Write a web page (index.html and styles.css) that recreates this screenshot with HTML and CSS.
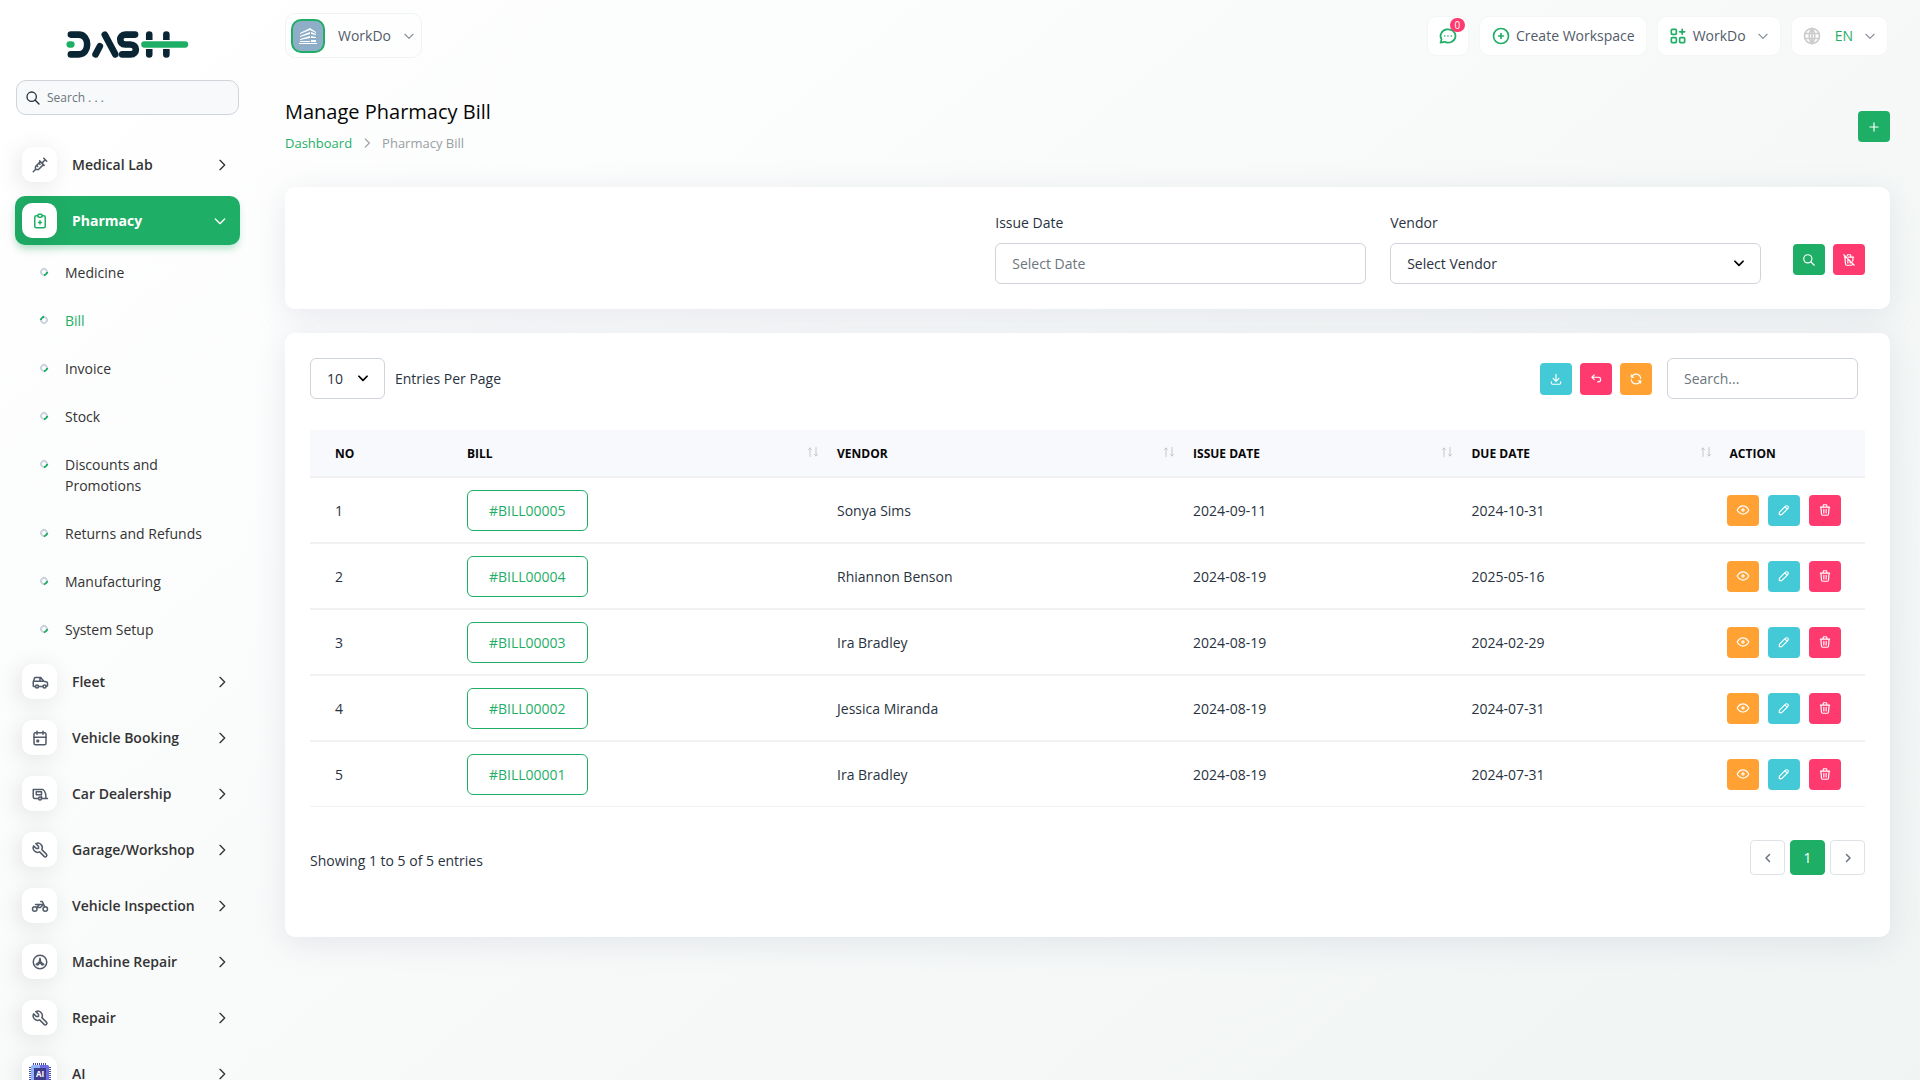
FILE: index.html
```
<!DOCTYPE html>
<html lang="en">
<head>
    <meta charset="UTF-8">
    <meta name="viewport" content="width=device-width, initial-scale=1.0">
    <title>Manage Pharmacy Bill</title>
    <link rel="stylesheet" href="styles.css">
</head>
<body>

    <!-- Icon sprite -->
    <svg class="sprite" aria-hidden="true">
        <symbol id="i-right" viewBox="0 0 24 24"><path d="M9 5l7 7-7 7"/></symbol>
        <symbol id="i-left" viewBox="0 0 24 24"><path d="M15 5l-7 7 7 7"/></symbol>
        <symbol id="i-down" viewBox="0 0 24 24"><path d="M5 9l7 7 7-7"/></symbol>
        <symbol id="i-search" viewBox="0 0 24 24"><circle cx="10" cy="10" r="7"/><path d="M21 21l-6-6"/></symbol>
        <symbol id="i-plus" viewBox="0 0 24 24"><path d="M12 5v14M5 12h14"/></symbol>
        <symbol id="i-vaccine" viewBox="0 0 24 24"><path d="M17 3l4 4M19 5l-4.500 4.500M11.500 6.500l6 6M16.500 11.500L10 18H6v-4l6.500-6.500M7.500 12.500L9 14M10.500 9.500L12 11M3 21l3-3"/></symbol>
        <symbol id="i-clipboard" viewBox="0 0 24 24"><path d="M9 5H7a2 2 0 0 0-2 2v12a2 2 0 0 0 2 2h10a2 2 0 0 0 2-2V7a2 2 0 0 0-2-2h-2M10 14h4M12 12v4"/><rect x="9" y="3" width="6" height="4" rx="2"/></symbol>
        <symbol id="i-car" viewBox="0 0 24 24"><circle cx="8" cy="18" r="2"/><circle cx="18" cy="18" r="2"/><path d="M6 18H4a1 1 0 0 1-1-1v-5l2-6h8l4 5 4 1a2 2 0 0 1 1 2v3l-2 1M16 18h-6M3 11h14M12 11V6"/></symbol>
        <symbol id="i-calendar" viewBox="0 0 24 24"><rect x="4" y="5" width="16" height="16" rx="2"/><path d="M16 3v4M8 3v4M4 11h16M8 15h2v2H8z"/></symbol>
        <symbol id="i-caravan" viewBox="0 0 24 24"><path d="M10 18H5a2 2 0 0 1-2-2V6h13c3 2 4 6 4 12h2M14 18h6M14 15v3"/><circle cx="12" cy="18" r="2"/><rect x="7" y="9" width="7" height="4"/></symbol>
        <symbol id="i-tool" viewBox="0 0 24 24"><path d="M7 10h3V7L6.500 3.500a6 6 0 0 1 8 8l6 6a2 2 0 0 1-3 3l-6-6a6 6 0 0 1-8-8L7 10"/></symbol>
        <symbol id="i-motorbike" viewBox="0 0 24 24"><circle cx="5" cy="16" r="3"/><circle cx="19" cy="16" r="3"/><path d="M7.500 14h5l4-4H6M7.500 14l4-4M13 6h2l1.500 3 2 4"/></symbol>
        <symbol id="i-fan" viewBox="0 0 24 24"><circle cx="12" cy="12" r="9"/><path d="M12 7l-1 5-4 3 2 1 3-3 3 3 2-1-4-3zM12 10v3"/></symbol>
        <symbol id="i-chat" viewBox="0 0 24 24"><path d="M3 20l1.300-3.900A9 8 0 1 1 7.700 19L3 20M12 12v.01M8 12v.01M16 12v.01"/></symbol>
        <symbol id="i-circle-plus" viewBox="0 0 24 24"><circle cx="12" cy="12" r="9"/><path d="M9 12h6M12 9v6"/></symbol>
        <symbol id="i-apps" viewBox="0 0 24 24"><rect x="4" y="4" width="6" height="6" rx="1"/><rect x="4" y="14" width="6" height="6" rx="1"/><rect x="14" y="14" width="6" height="6" rx="1"/><path d="M14 7h6M17 4v6"/></symbol>
        <symbol id="i-world" viewBox="0 0 24 24"><circle cx="12" cy="12" r="9"/><path d="M3.600 9h16.800M3.600 15h16.800M12 3v18M11.500 3a17 17 0 0 0 0 18M12.500 3a17 17 0 0 1 0 18"/></symbol>
        <symbol id="i-trash" viewBox="0 0 24 24"><path d="M4 7h16M10 11v6M14 11v6M5 7l1 12a2 2 0 0 0 2 2h8a2 2 0 0 0 2-2l1-12M9 7V4a1 1 0 0 1 1-1h4a1 1 0 0 1 1 1v3"/></symbol>
        <symbol id="i-trash-off" viewBox="0 0 24 24"><path d="M3 3l18 18M4 7h3M11 7h9M10 11v6M14 14v3M5 7l1 12a2 2 0 0 0 2 2h8a2 2 0 0 0 2-2l.100-1M18.400 14L19 7M9 5V4a1 1 0 0 1 1-1h4a1 1 0 0 1 1 1v3"/></symbol>
        <symbol id="i-download" viewBox="0 0 24 24"><path d="M4 17v2a2 2 0 0 0 2 2h12a2 2 0 0 0 2-2v-2M7 11l5 5 5-5M12 4v12"/></symbol>
        <symbol id="i-undo" viewBox="0 0 24 24"><path d="M9 13L5 9l4-4M5 9h11a4 4 0 0 1 0 8h-1"/></symbol>
        <symbol id="i-refresh" viewBox="0 0 24 24"><path d="M20 11A8 8 0 0 0 4.500 9M4 5v4h4M4 13a8 8 0 0 0 15.500 2M20 19v-4h-4"/></symbol>
        <symbol id="i-eye" viewBox="0 0 24 24"><circle cx="12" cy="12" r="2"/><path d="M22 12c-2.700 4.700-6 7-10 7s-7.300-2.300-10-7c2.700-4.700 6-7 10-7s7.300 2.300 10 7"/></symbol>
        <symbol id="i-pencil" viewBox="0 0 24 24"><path d="M4 20h4L18.500 9.500a2.800 2.800 0 0 0-4-4L4 16v4M13.500 6.500l4 4"/></symbol>
        <symbol id="i-sort" viewBox="0 0 24 24"><path d="M6 21V4M3 7l3-3 3 3M18 3v17M15 17l3 3 3-3"/></symbol>
    </svg>

    <aside class="sidebar">
        <a href="#" class="logo" aria-label="Dash">
            <svg viewBox="198 94 370 82" width="123" height="27">
                <g fill="none" stroke="#0a2533" stroke-width="20" stroke-linecap="round" stroke-linejoin="round">
                    <path d="M211 105h24c34 0 34 60 0 60h-24"/>
                    <path d="M286 165l13-25M314 105l32 60"/>
                    <path d="M406 105h-30c-20 0-20 30 0 30h16c22 0 22 30 0 30h-25"/>
                    <path d="M449 105v60M501 105v60"/>
                </g>
                <path d="M430 135h130" stroke="#fff" stroke-width="28"/>
                <path d="M434 135h124M207 135h6" stroke="#1fae66" stroke-width="19" stroke-linecap="round"/>
            </svg>
        </a>
        <div class="side-search">
            <svg class="icon"><use href="#i-search"/></svg>
            <input type="text" placeholder="Search . . ." aria-label="Search menu">
        </div>
        <nav class="side-nav">
            <a href="#" class="nav-link"><span class="nav-icon"><svg class="icon"><use href="#i-vaccine"/></svg></span>Medical Lab<svg class="icon arrow"><use href="#i-right"/></svg></a>
            <a href="#" class="nav-link active"><span class="nav-icon"><svg class="icon"><use href="#i-clipboard"/></svg></span>Pharmacy<svg class="icon arrow"><use href="#i-down"/></svg></a>
            <ul class="submenu">
                <li><a href="#">Medicine</a></li>
                <li class="current"><a href="#">Bill</a></li>
                <li><a href="#">Invoice</a></li>
                <li><a href="#">Stock</a></li>
                <li><a href="#">Discounts and Promotions</a></li>
                <li><a href="#">Returns and Refunds</a></li>
                <li><a href="#">Manufacturing</a></li>
                <li><a href="#">System Setup</a></li>
            </ul>
            <a href="#" class="nav-link"><span class="nav-icon"><svg class="icon"><use href="#i-car"/></svg></span>Fleet<svg class="icon arrow"><use href="#i-right"/></svg></a>
            <a href="#" class="nav-link"><span class="nav-icon"><svg class="icon"><use href="#i-calendar"/></svg></span>Vehicle Booking<svg class="icon arrow"><use href="#i-right"/></svg></a>
            <a href="#" class="nav-link"><span class="nav-icon"><svg class="icon"><use href="#i-caravan"/></svg></span>Car Dealership<svg class="icon arrow"><use href="#i-right"/></svg></a>
            <a href="#" class="nav-link"><span class="nav-icon"><svg class="icon"><use href="#i-tool"/></svg></span>Garage/Workshop<svg class="icon arrow"><use href="#i-right"/></svg></a>
            <a href="#" class="nav-link"><span class="nav-icon"><svg class="icon"><use href="#i-motorbike"/></svg></span>Vehicle Inspection<svg class="icon arrow"><use href="#i-right"/></svg></a>
            <a href="#" class="nav-link"><span class="nav-icon"><svg class="icon"><use href="#i-fan"/></svg></span>Machine Repair<svg class="icon arrow"><use href="#i-right"/></svg></a>
            <a href="#" class="nav-link"><span class="nav-icon"><svg class="icon"><use href="#i-tool"/></svg></span>Repair<svg class="icon arrow"><use href="#i-right"/></svg></a>
            <a href="#" class="nav-link"><span class="nav-icon">
                <svg viewBox="0 0 22 22" width="22" height="22">
                    <path d="M4 1h14M4 21h14" stroke="#4b4a9c" stroke-width="2" stroke-dasharray="1 1"/>
                    <path d="M1 4v14M21 4v14" stroke="#4b4a9c" stroke-width="2" stroke-dasharray="1 1"/>
                    <rect x="2" y="2" width="18" height="18" rx="2" fill="#8fb4fb"/>
                    <path d="M11 2h7a2 2 0 0 1 2 2v14a2 2 0 0 1-2 2h-7z" fill="#6a6be0"/>
                    <rect x="5" y="5" width="12" height="12" fill="#403c8c"/>
                    <text x="11" y="14" text-anchor="middle" class="chip-text">AI</text>
                </svg></span>AI<svg class="icon arrow"><use href="#i-right"/></svg></a>
        </nav>
    </aside>

    <main class="main">
        <header class="topbar">
            <button class="profile">
                <svg class="avatar" viewBox="0 0 34 34" width="34" height="34">
                    <rect x="1" y="1" width="32" height="32" rx="9" fill="#8eadc6" stroke="#1fae66" stroke-width="2"/>
                    <path d="M9 14l10-5 6 4v1l-6-3-10 4zM9 17l10-4v2L9 18zM9 20l10-3v2L9 21zM20 13l5 2v1l-5-1zM20 17l5 1v1h-5zM9 22h10v1H9zM20 21h5v2h-5zM8 24h18v1H8z" fill="#fff"/>
                </svg>
                WorkDo
                <svg class="icon caret"><use href="#i-down"/></svg>
            </button>
            <div class="top-actions">
                <button class="top-btn chat" aria-label="Messages"><svg class="icon"><use href="#i-chat"/></svg><span class="badge">0</span></button>
                <button class="top-btn create"><svg class="icon"><use href="#i-circle-plus"/></svg>Create Workspace</button>
                <button class="top-btn"><svg class="icon"><use href="#i-apps"/></svg>WorkDo<svg class="icon caret"><use href="#i-down"/></svg></button>
                <button class="top-btn lang"><svg class="icon globe"><use href="#i-world"/></svg>EN<svg class="icon caret"><use href="#i-down"/></svg></button>
            </div>
        </header>

        <div class="page-head">
            <div>
                <h1>Manage Pharmacy Bill</h1>
                <div class="breadcrumb">
                    <a href="#">Dashboard</a>
                    <svg class="icon"><use href="#i-right"/></svg>
                    <span>Pharmacy Bill</span>
                </div>
            </div>
            <button class="btn green" aria-label="Create"><svg class="icon"><use href="#i-plus"/></svg></button>
        </div>

        <section class="card filters">
            <div class="field">
                <label for="issueDate">Issue Date</label>
                <input type="text" id="issueDate" class="control" placeholder="Select Date">
            </div>
            <div class="field">
                <label for="vendor">Vendor</label>
                <div class="select-wrap">
                    <select id="vendor" class="control"><option>Select Vendor</option></select>
                    <svg class="icon"><use href="#i-down"/></svg>
                </div>
            </div>
            <div class="filter-btns">
                <button class="btn green" aria-label="Apply"><svg class="icon"><use href="#i-search"/></svg></button>
                <button class="btn pink" aria-label="Reset"><svg class="icon"><use href="#i-trash-off"/></svg></button>
            </div>
        </section>

        <section class="card list">
            <div class="table-top">
                <div class="entries">
                    <div class="select-wrap">
                        <select id="perPage" class="control"><option>10</option></select>
                        <svg class="icon"><use href="#i-down"/></svg>
                    </div>
                    <label for="perPage">Entries Per Page</label>
                </div>
                <div class="tools">
                    <button class="btn cyan" aria-label="Export"><svg class="icon"><use href="#i-download"/></svg></button>
                    <button class="btn pink" aria-label="Undo"><svg class="icon"><use href="#i-undo"/></svg></button>
                    <button class="btn orange" aria-label="Reload"><svg class="icon"><use href="#i-refresh"/></svg></button>
                    <input type="text" class="control" placeholder="Search..." aria-label="Search bills">
                </div>
            </div>

            <table>
                <thead>
                    <tr>
                        <th class="col-no">No</th>
                        <th class="col-bill">Bill<svg class="icon sort"><use href="#i-sort"/></svg></th>
                        <th class="col-vendor">Vendor<svg class="icon sort"><use href="#i-sort"/></svg></th>
                        <th class="col-issue">Issue Date<svg class="icon sort"><use href="#i-sort"/></svg></th>
                        <th class="col-due">Due Date<svg class="icon sort"><use href="#i-sort"/></svg></th>
                        <th>Action</th>
                    </tr>
                </thead>
                <tbody id="rows"></tbody>
            </table>

            <div class="table-bottom">
                <span class="info">Showing 1 to 5 of 5 entries</span>
                <div class="pages">
                    <a href="#" aria-label="Previous"><svg class="icon"><use href="#i-left"/></svg></a>
                    <a href="#" class="on">1</a>
                    <a href="#" aria-label="Next"><svg class="icon"><use href="#i-right"/></svg></a>
                </div>
            </div>
        </section>
    </main>

    <script src="script.js"></script>
</body>
</html>
```
FILE: styles.css
```
*, *::before {
    margin: 0;
    padding: 0;
    box-sizing: border-box;
}

body {
    font-family: "Open Sans", sans-serif;
    font-size: 14px;
    line-height: 21px;
    color: #293240;
    background: linear-gradient(141deg, rgba(240, 244, 243, 0) 3%, #f0f4f3 100%) #fff;
    min-height: 100vh;
    display: flex;
}

a {
    text-decoration: none;
    color: inherit;
}

button, input, select {
    font: inherit;
    color: inherit;
}

button {
    border: none;
    cursor: pointer;
}

.sprite {
    position: absolute;
    width: 0;
    height: 0;
}

.icon {
    width: 18px;
    height: 18px;
    fill: none;
    stroke: currentColor;
    stroke-width: 2;
    stroke-linecap: round;
    stroke-linejoin: round;
    flex-shrink: 0;
}

/* Sidebar */
.sidebar {
    width: 280px;
    height: 100vh;
    flex-shrink: 0;
    display: flex;
    flex-direction: column;
    overflow: hidden;
}

.logo {
    height: 80px;
    padding: 31px 0 0 66px;
}

.side-search {
    display: flex;
    align-items: center;
    gap: 6px;
    width: 223px;
    height: 35px;
    margin-left: 16px;
    padding: 0 8px;
    background: #f8f9fa;
    border: 1px solid #ced4da;
    border-radius: 10px;
}

.side-search .icon {
    width: 16px;
    height: 16px;
}

.side-search input {
    width: 100%;
    border: none;
    outline: none;
    background: none;
    font-size: 12px;
}

::placeholder {
    color: #6c757d;
    opacity: 1;
}

.side-nav {
    flex: 1;
    min-height: 0;
    margin-top: 15px;
    padding: 10px 40px 0 15px;
    overflow: hidden;
}

.nav-link {
    display: flex;
    align-items: center;
    height: 49px;
    margin-bottom: 7px;
    padding: 0 10px 0 7px;
    border-radius: 10px;
    color: #333;
    font-weight: 600;
}

.nav-icon {
    display: flex;
    align-items: center;
    justify-content: center;
    width: 35px;
    height: 35px;
    margin-right: 15px;
    border-radius: 10px;
    background: #fff;
    color: #525b69;
    box-shadow: -3px 4px 23px rgba(0, 0, 0, 0.1);
}

.arrow {
    width: 16px;
    height: 16px;
    margin-left: auto;
}

.nav-link.active {
    padding-right: 12px;
    background: #1fae66;
    color: #fff;
    font-weight: 700;
    box-shadow: 0 5px 7px -1px rgba(31, 174, 102, 0.3);
}

.active .nav-icon {
    color: #1fae66;
}

.chip-text {
    font-size: 8px;
    font-weight: 700;
    fill: #fff;
}

.submenu {
    list-style: none;
    margin-top: -7px;
    margin-bottom: 7px;
    color: #333;
}

.submenu li {
    display: flex;
    padding: 17px 40px 10px 25px;
}

.submenu li::before {
    content: "";
    flex-shrink: 0;
    width: 8px;
    height: 8px;
    margin: 6px 17px 0 0;
    border: 2px solid #ccd3dc;
    border-right-color: #1fae66;
    border-radius: 50%;
    transform: rotate(45deg);
}

.submenu li:nth-child(n+6) {
    padding-right: 0;
}

.submenu .current {
    color: #1fae66;
}

.submenu .current::before {
    transform: rotate(225deg);
}

/* Top bar */
.main {
    flex: 1;
    min-width: 0;
    padding: 13px 30px 40px 5px;
}

.topbar {
    display: flex;
    align-items: center;
    justify-content: space-between;
    height: 45px;
    padding-right: 2px;
    color: #525b69;
}

.profile {
    display: flex;
    align-items: center;
    height: 45px;
    padding: 0 5px;
    background: none;
    border: 1px solid #f1f3f3;
    border-radius: 10px;
}

.avatar {
    margin-right: 13px;
}

.profile .caret {
    width: 14px;
    height: 14px;
    margin-left: 11px;
    color: #8a919b;
}

.top-actions {
    display: flex;
    gap: 10px;
}

.top-btn {
    position: relative;
    display: flex;
    align-items: center;
    gap: 5px;
    height: 40px;
    padding: 0 10px;
    background: #fff;
    border: 1px solid #f4f6f6;
    border-radius: 10px;
}

.top-btn.create {
    padding: 0 11px;
}

.top-btn .icon {
    width: 20px;
    height: 20px;
    color: #1fae66;
}

.top-btn .caret {
    width: 14px;
    height: 14px;
    margin-left: 5px;
    color: #8a919b;
}

.top-btn .globe {
    margin-right: 8px;
    color: #ccc;
}

.top-btn.lang {
    color: #1fae66;
}

.badge {
    position: absolute;
    top: 1px;
    right: 3px;
    width: 15px;
    height: 14px;
    border-radius: 7px;
    background: #ff3a6e;
    color: #fff;
    font-size: 10px;
    line-height: 14px;
}

/* Page title */
.page-head {
    display: flex;
    align-items: center;
    justify-content: space-between;
    margin: 42px 0 34px;
}

h1 {
    font-size: 20px;
    font-weight: 500;
    line-height: 24px;
    color: #060606;
}

.breadcrumb {
    display: flex;
    align-items: center;
    gap: 8px;
    margin-top: 9px;
    font-size: 13px;
    line-height: 20px;
    color: #9a9da3;
}

.breadcrumb a {
    color: #1fae66;
}

.breadcrumb .icon {
    width: 14px;
    height: 14px;
}

.btn {
    display: flex;
    align-items: center;
    justify-content: center;
    width: 32px;
    height: 31px;
    border-radius: 4px;
    color: #fff;
}

.btn .icon {
    width: 14px;
    height: 14px;
}

.green { background: #1fae66; }
.pink { background: #ff3a6e; }
.orange { background: #ffa233; }
.cyan { background: #44c9d6; }

/* Cards */
.card {
    margin-bottom: 24px;
    padding: 25px;
    background: #fff;
    border-radius: 10px;
    box-shadow: 0 6px 30px rgba(182, 186, 203, 0.3);
}

.control {
    display: block;
    width: 100%;
    height: 41px;
    padding: 0 16px;
    border: 1px solid #ced4da;
    border-radius: 6px;
    background: #fff;
    appearance: none;
}

.select-wrap {
    position: relative;
}

.select-wrap .icon {
    position: absolute;
    top: 13px;
    right: 15px;
    width: 14px;
    height: 14px;
    color: #000;
    stroke-width: 3;
    pointer-events: none;
}

.filters {
    display: flex;
    justify-content: flex-end;
    align-items: flex-end;
    gap: 24px;
}

.field {
    width: 23.85%;
}

.field label {
    display: block;
    margin-bottom: 10px;
}

.filter-btns {
    display: flex;
    gap: 8px;
    padding: 0 0 9px 8px;
}

.list {
    padding-bottom: 62px;
}

.table-top, .entries, .tools {
    display: flex;
    align-items: center;
}

.table-top {
    justify-content: space-between;
    margin-bottom: 31px;
    padding-right: 7px;
}

.entries {
    gap: 10px;
}

.entries .select-wrap {
    width: 75px;
}

.tools {
    gap: 8px;
}

.tools .btn {
    height: 32px;
}

.tools .control {
    width: 191px;
    margin-left: 7px;
}

/* Table */
table {
    width: 100%;
    border-collapse: separate;
    border-spacing: 0;
    table-layout: fixed;
}

th {
    position: relative;
    height: 48px;
    padding: 0 10px;
    background: #f8f9fd;
    border-bottom: 2px solid #f1f1f1;
    color: #060606;
    font-size: 12px;
    font-weight: 700;
    text-align: left;
    text-transform: uppercase;
}

.col-no { width: 9.45%; }
.col-bill { width: 23.8%; }
.col-vendor { width: 22.9%; }
.col-issue { width: 17.9%; }
.col-due { width: 16.6%; }

.sort {
    position: absolute;
    top: 16px;
    right: 8px;
    width: 12px;
    height: 12px;
    color: #c4c6ca;
}

td {
    height: 66px;
    padding: 0 10px;
    border-bottom: 2px solid #f1f1f1;
}

th:first-child, td:first-child {
    padding-left: 25px;
}

tr:last-child td {
    height: 65px;
    border-bottom-width: 1px;
}

.bill-link {
    display: inline-block;
    padding: 9px 21px;
    border: 1px solid #1fae66;
    border-radius: 6px;
    color: #1fae66;
}

.row-actions {
    display: flex;
    gap: 9px;
    margin-left: -3px;
}

.table-bottom {
    display: flex;
    justify-content: space-between;
    align-items: center;
    margin-top: 33px;
}

.info {
    padding-top: 6px;
}

.pages {
    display: flex;
    gap: 5px;
}

.pages a {
    display: flex;
    align-items: center;
    justify-content: center;
    width: 35px;
    height: 35px;
    border: 1px solid #dee2e6;
    border-radius: 4px;
    color: #6c757d;
}

.pages .icon {
    width: 12px;
    height: 12px;
    stroke-width: 3;
}

.pages .on {
    background: #1fae66;
    border-color: #1fae66;
    color: #fff;
}
```
FILE: script.js
```
const bills = [
    ['#BILL00005', 'Sonya Sims', '2024-09-11', '2024-10-31'],
    ['#BILL00004', 'Rhiannon Benson', '2024-08-19', '2025-05-16'],
    ['#BILL00003', 'Ira Bradley', '2024-08-19', '2024-02-29'],
    ['#BILL00002', 'Jessica Miranda', '2024-08-19', '2024-07-31'],
    ['#BILL00001', 'Ira Bradley', '2024-08-19', '2024-07-31']
];

function actionButton(color, icon, label) {
    return `<button class="btn ${color}" aria-label="${label}"><svg class="icon"><use href="#i-${icon}"/></svg></button>`;
}

document.getElementById('rows').innerHTML = bills.map((bill, i) => `
    <tr>
        <td>${i + 1}</td>
        <td><a href="#" class="bill-link">${bill[0]}</a></td>
        <td>${bill[1]}</td>
        <td>${bill[2]}</td>
        <td>${bill[3]}</td>
        <td><div class="row-actions">
            ${actionButton('orange', 'eye', 'View')}
            ${actionButton('cyan', 'pencil', 'Edit')}
            ${actionButton('pink', 'trash', 'Delete')}
        </div></td>
    </tr>`).join('');
```
